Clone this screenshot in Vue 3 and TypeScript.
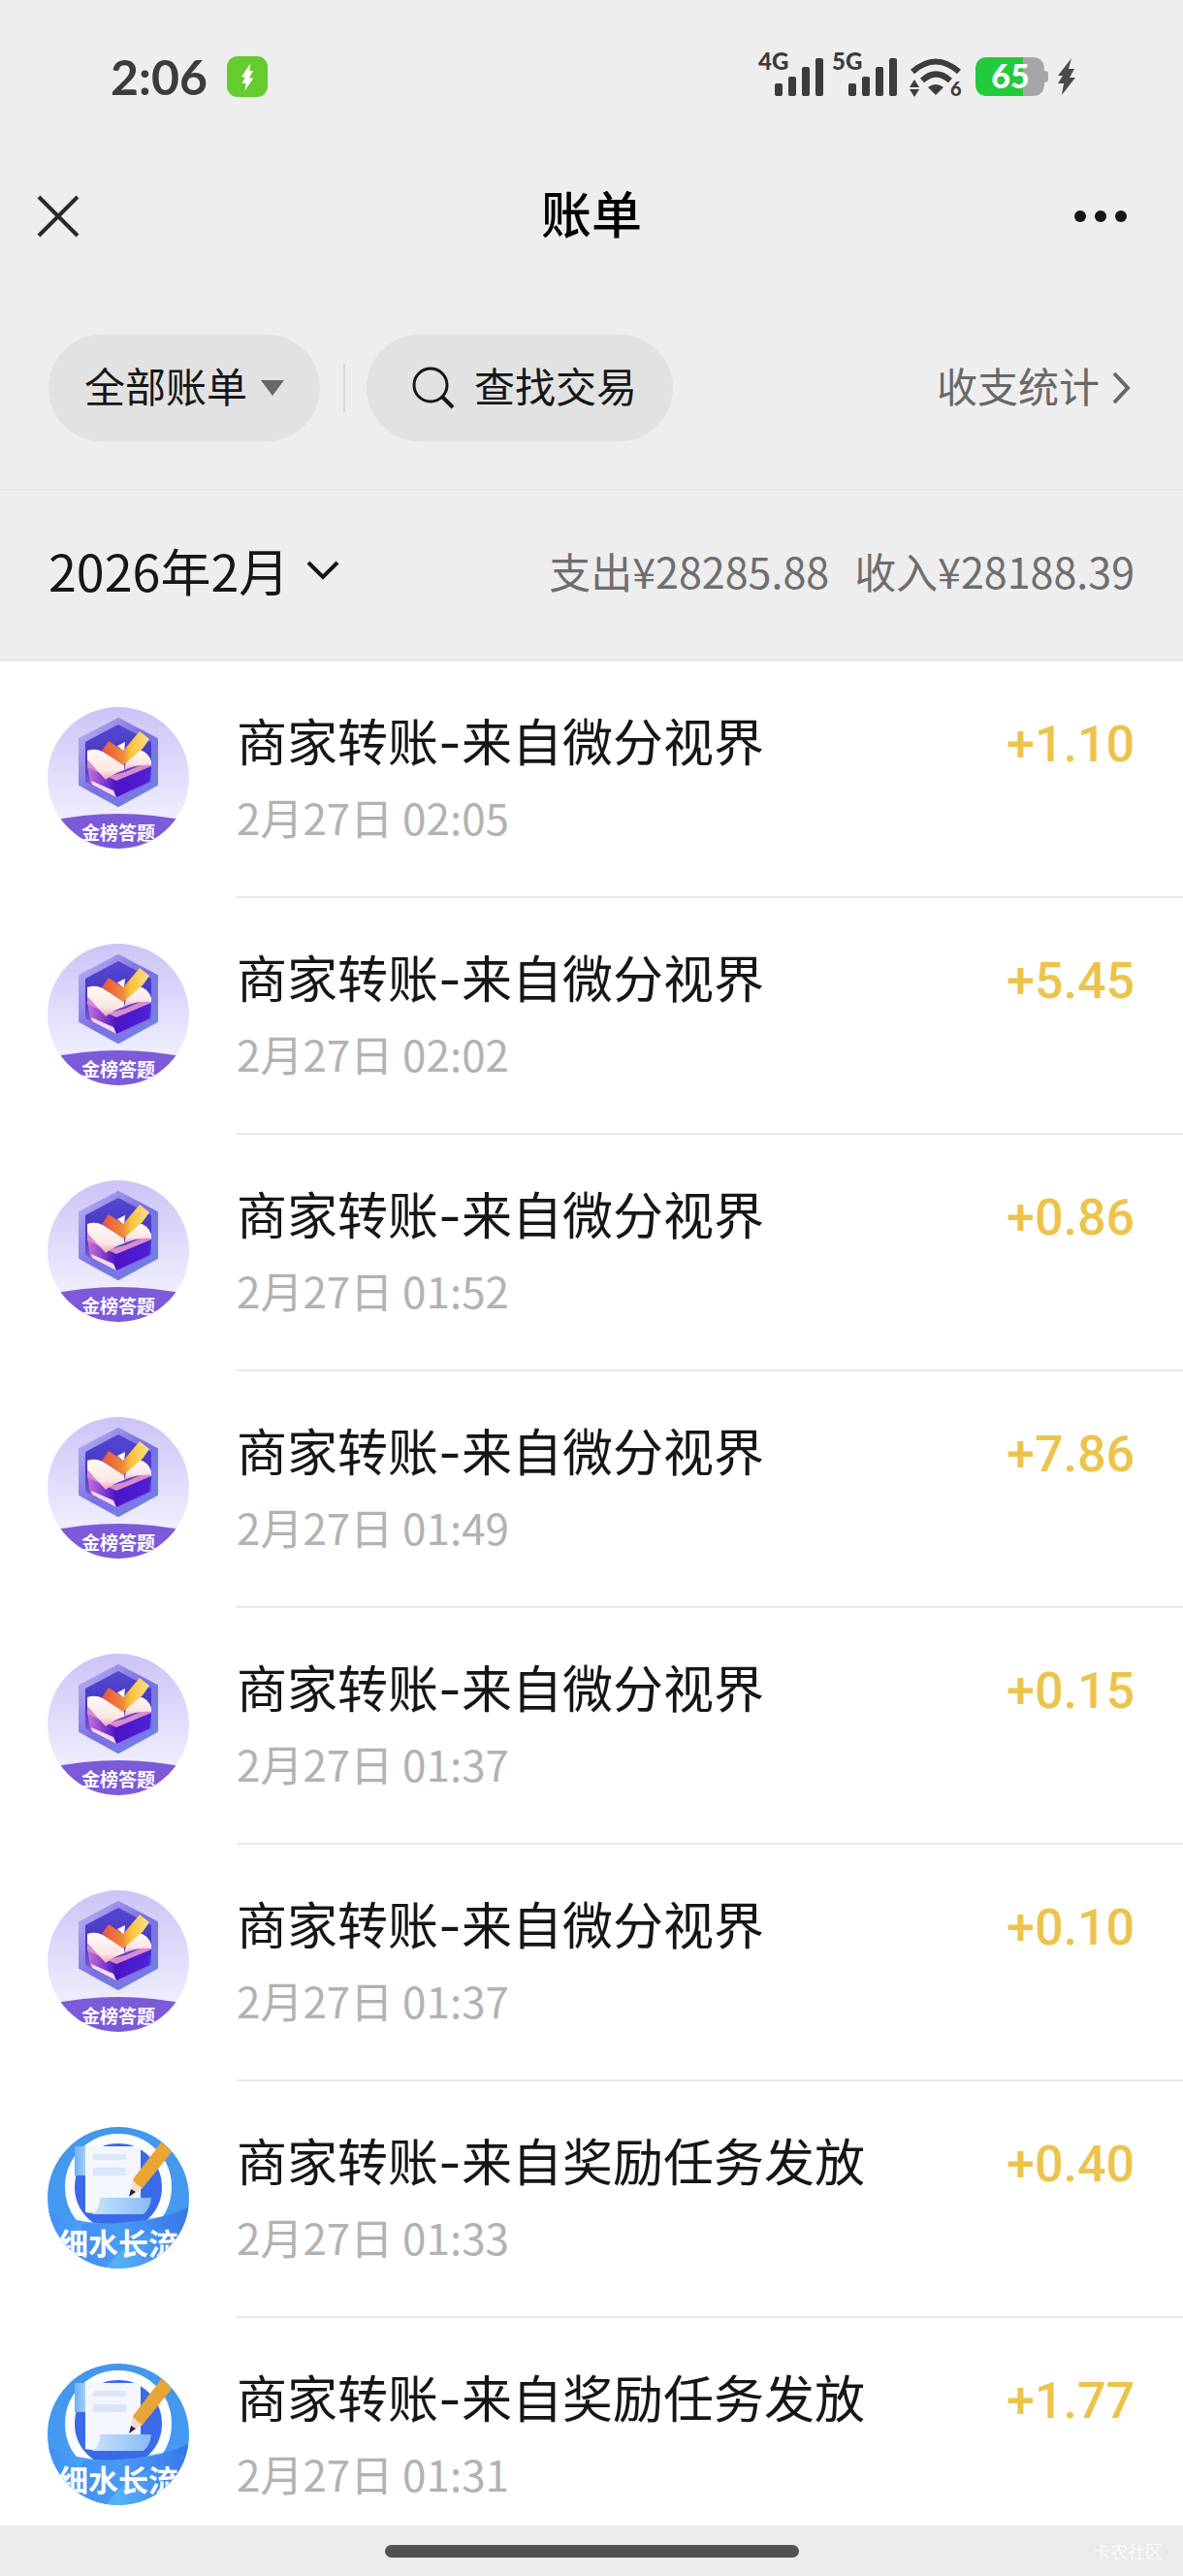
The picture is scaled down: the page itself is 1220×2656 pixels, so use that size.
<script setup lang="ts">
type Merchant = 'quiz' | 'task'

interface Bill {
  id: number
  merchant: Merchant
  title: string
  time: string
  amount: string
}

const names: Record<Merchant, string> = {
  quiz: '商家转账-来自微分视界',
  task: '商家转账-来自奖励任务发放',
}

const source: [Merchant, string, string][] = [
  ['quiz', '2月27日 02:05', '+1.10'],
  ['quiz', '2月27日 02:02', '+5.45'],
  ['quiz', '2月27日 01:52', '+0.86'],
  ['quiz', '2月27日 01:49', '+7.86'],
  ['quiz', '2月27日 01:37', '+0.15'],
  ['quiz', '2月27日 01:37', '+0.10'],
  ['task', '2月27日 01:33', '+0.40'],
  ['task', '2月27日 01:31', '+1.77'],
]

const bills: Bill[] = source.map(([merchant, time, amount], id) => ({
  id,
  merchant,
  title: names[merchant],
  time,
  amount,
}))

const networks = ['4G', '5G']
</script>

<template>
  <div class="page" lang="zh-CN">
    <header class="top">
      <div class="status">
        <div class="status-left">
          <span class="clock">2:06</span>
          <svg class="badge" viewBox="0 0 42 42" aria-hidden="true">
            <rect width="42" height="42" rx="11" fill="#66cb2e" />
            <path d="M24 7.500L15 21.500H19L15.500 28H19.500L18.500 35.500L27.500 22.500H23L27 15H23.500Z" fill="#fff" />
          </svg>
        </div>
        <div class="status-right">
          <svg v-for="net in networks" :key="net" class="signal" viewBox="0 0 68 44">
            <text x="0" y="15" class="net">{{ net }}</text>
            <g fill="#3c3c3c">
              <rect x="17" y="29" width="8" height="13" rx="2" />
              <rect x="31" y="22" width="8" height="20" rx="2" />
              <rect x="45" y="12" width="8" height="30" rx="2" />
              <rect x="59" y="3" width="8" height="39" rx="2" />
            </g>
          </svg>
          <svg class="wifi" viewBox="0 0 54 44">
            <g fill="none" stroke="#3c3c3c" stroke-width="6">
              <path d="M3 17Q27 -4 51 17" />
              <path d="M13 26Q27 13 42 26" />
            </g>
            <path d="M19 33Q27 27 35 33L27 41Z" fill="#3c3c3c" />
            <path d="M0 33L5 25L10 33ZM0 35H10L5 43Z" fill="#3c3c3c" />
            <text x="42" y="42" class="gen">6</text>
          </svg>
          <svg class="battery" viewBox="0 0 76 40">
            <path d="M13 0H58Q71 0 71 13V14Q75 14 75 17V23Q75 26 71 26V27Q71 40 58 40H13Q0 40 0 27V13Q0 0 13 0Z" fill="#a6a6a8" />
            <path d="M13 0H49V40H13Q0 40 0 27V13Q0 0 13 0Z" fill="#22ca3c" />
            <text x="36" y="32" text-anchor="middle" class="level">65</text>
          </svg>
          <svg class="bolt" viewBox="0 0 20 38" aria-hidden="true">
            <path d="M15 0L1 18H6L1 26H7L5 38L19 20H13L18 11H12Z" fill="#4a4a4a" />
          </svg>
        </div>
      </div>

      <nav class="nav">
        <button class="icon-button" type="button" aria-label="关闭">
          <svg width="44" height="44" viewBox="0 0 44 44">
            <path d="M2 2L42 42M42 2L2 42" stroke="#2a2a2a" stroke-width="4" />
          </svg>
        </button>
        <h1>账单</h1>
        <button class="icon-button more" type="button" aria-label="更多">
          <svg width="54" height="44" viewBox="0 0 54 44" fill="#161616">
            <circle cx="6" cy="22" r="6" />
            <circle cx="27" cy="22" r="6" />
            <circle cx="48" cy="22" r="6" />
          </svg>
        </button>
      </nav>

      <div class="filters">
        <button class="pill kind" type="button">
          全部账单
          <svg width="24" height="16" viewBox="0 0 24 16"><path d="M0 0H24L12 16Z" fill="#686868" /></svg>
        </button>
        <span class="rule"></span>
        <button class="pill find" type="button">
          <svg width="44" height="44" viewBox="0 0 44 44" fill="none" stroke="#161616" stroke-width="3">
            <circle cx="19" cy="19" r="17" />
            <path d="M31 31L42 42" stroke-width="4" />
          </svg>
          查找交易
        </button>
        <a class="stats" href="#stats">
          收支统计
          <svg width="18" height="32" viewBox="0 0 18 32" fill="none" stroke="#686868" stroke-width="4">
            <path d="M1 1L15 16L1 31" />
          </svg>
        </a>
      </div>
    </header>

    <section class="month">
      <button class="month-picker" type="button">
        2026年2月
        <svg width="34" height="20" viewBox="0 0 34 20" fill="none" stroke="#161616" stroke-width="4">
          <path d="M2 2L17 17L32 2" />
        </svg>
      </button>
      <p class="totals">
        <span>支出¥28285.88</span>
        <span>收入¥28188.39</span>
      </p>
    </section>

    <ul class="bills">
      <li v-for="bill in bills" :key="bill.id" class="bill">
        <svg v-if="bill.merchant === 'quiz'" class="logo" viewBox="0 0 146 146">
          <defs>
            <linearGradient id="quiz-sky" x1="0" y1="0" x2="0" y2="1">
              <stop offset="0" stop-color="#cbc4f7" />
              <stop offset="0.75" stop-color="#eeecfe" />
            </linearGradient>
            <linearGradient id="quiz-edge" x1="0" y1="0" x2="1" y2="1">
              <stop offset="0" stop-color="#bcb4f6" />
              <stop offset="0.5" stop-color="#7b6fe2" />
              <stop offset="1" stop-color="#6d86ea" />
            </linearGradient>
            <linearGradient id="quiz-core" x1="0" y1="0" x2="0" y2="1">
              <stop offset="0" stop-color="#5347d2" />
              <stop offset="0.5" stop-color="#4636be" />
              <stop offset="1" stop-color="#9c72e6" />
            </linearGradient>
            <linearGradient id="quiz-cover" x1="0" y1="0" x2="1" y2="0">
              <stop offset="0" stop-color="#c873d8" />
              <stop offset="0.45" stop-color="#4a14c4" />
              <stop offset="1" stop-color="#4f22d8" />
            </linearGradient>
            <linearGradient id="quiz-page" x1="0" y1="0" x2="0" y2="1">
              <stop offset="0" stop-color="#fffaf6" />
              <stop offset="0.7" stop-color="#fbe6e4" />
              <stop offset="1" stop-color="#ee9db4" />
            </linearGradient>
            <linearGradient id="quiz-tick" x1="0" y1="0" x2="1" y2="0">
              <stop offset="0" stop-color="#e8523e" />
              <stop offset="0.45" stop-color="#f08a3c" />
              <stop offset="0.6" stop-color="#f8c23c" />
              <stop offset="1" stop-color="#fbe08a" />
            </linearGradient>
            <clipPath id="quiz-clip"><circle cx="73" cy="73" r="73" /></clipPath>
          </defs>
          <g clip-path="url(#quiz-clip)">
            <rect width="146" height="146" fill="url(#quiz-sky)" />
            <path d="M73 12L113 33V80L73 102L33 80V33Z" fill="url(#quiz-edge)" stroke="url(#quiz-edge)" stroke-width="2" stroke-linejoin="round" />
            <path d="M73 18L107 36V77L73 95L39 77V36Z" fill="url(#quiz-core)" />
            <path d="M41 60L71 74L107 58L105 77L71 93L44 78Z" fill="url(#quiz-cover)" />
            <path d="M45 76L68 86L71 93L46 80Z" fill="#f3d9f2" />
            <path d="M41 48L60 72L80 67L107 55V61L71 76L41 62Z" fill="#d98ad0" />
            <path d="M41 45Q49 42 57 46L79 59V65Q69 68 60 75L41 54Z" fill="url(#quiz-page)" />
            <path d="M79 65L81 57L94 44Q104 46 107 56V60Q92 59 79 65Z" fill="url(#quiz-page)" />
            <path d="M72 40L80 36L79 46Z" fill="#fff" />
            <path d="M63 35L78 45L95 25L105 33L98 43L78 60L56 45Z" fill="url(#quiz-tick)" />
            <path d="M0 118Q73 102 146 118V146H0Z" fill="#7d5ad8" />
            <text x="73" y="137" text-anchor="middle" class="quiz-name">金榜答题</text>
          </g>
        </svg>
        <svg v-else class="logo" viewBox="0 0 146 146">
          <defs>
            <linearGradient id="task-sky" x1="0" y1="0" x2="0" y2="1">
              <stop offset="0" stop-color="#4497e8" />
              <stop offset="1" stop-color="#439df8" />
            </linearGradient>
            <linearGradient id="task-sea" x1="0" y1="0" x2="1" y2="0">
              <stop offset="0" stop-color="#3f90f4" />
              <stop offset="0.5" stop-color="#56b2f5" />
              <stop offset="1" stop-color="#3873e8" />
            </linearGradient>
            <linearGradient id="task-roll" x1="0" y1="0" x2="1" y2="0">
              <stop offset="0" stop-color="#c9e2fb" />
              <stop offset="1" stop-color="#86bbf5" />
            </linearGradient>
            <linearGradient id="task-flap" x1="0" y1="0" x2="1" y2="0">
              <stop offset="0" stop-color="#6bb0f5" />
              <stop offset="1" stop-color="#a9d0f8" />
            </linearGradient>
            <clipPath id="task-clip"><circle cx="73" cy="73" r="73" /></clipPath>
          </defs>
          <g clip-path="url(#task-clip)">
            <rect width="146" height="146" fill="url(#task-sky)" />
            <circle cx="73" cy="62" r="50" fill="#3b6ae8" stroke="#fbfdff" stroke-width="10" />
            <path d="M0 86Q42 104 82 98Q120 96 146 82V146H0Z" fill="url(#task-sea)" />
            <path d="M36 100Q90 100 146 86V100Q90 104 60 146H30Z" fill="#3a7cf0" opacity="0.45" />
            <path d="M28 20H40V50H28Z" fill="url(#task-flap)" />
            <path d="M39 20H92Q96 20 96 24V80L54 88Q50 90 39 88Z" fill="#f4f6fd" />
            <path d="M47 28H81V34H47ZM47 42H81V50H47Z" fill="#dbe6fa" />
            <path d="M54 73H107Q106 84 99 90H46Q54 86 54 73Z" fill="url(#task-roll)" />
            <path d="M88 54L98 63L85 72Z" fill="#f2dccb" />
            <path d="M86 64L91 67L84 72Z" fill="#2a2346" />
            <path d="M118 15L128 26L98 63Q92 60 88 54Z" fill="#e9a536" />
            <text x="73" y="132" text-anchor="middle" class="task-name">细水长流</text>
          </g>
        </svg>
        <div class="detail">
          <div class="line">
            <span class="title">{{ bill.title }}</span>
            <span class="amount">{{ bill.amount }}</span>
          </div>
          <time class="time">{{ bill.time }}</time>
        </div>
      </li>
    </ul>

    <footer class="home">
      <span class="handle"></span>
      <span class="mark">卡农社区</span>
    </footer>
  </div>
</template>

<style>
body {
  background: #fff;
}
</style>

<style scoped>
.page {
  min-height: 100vh;
  color: #161616;
  font-family: 'Noto Sans CJK SC', 'Noto Sans', sans-serif;
}

button {
  margin: 0;
  padding: 0;
  border: 0;
  background: none;
  color: inherit;
  font: inherit;
}

svg {
  display: block;
  flex: none;
  overflow: visible;
}

.top {
  border-bottom: 2px solid #e6e6e6;
  background: #eee;
  font-family: Inter, 'Noto Sans CJK SC', sans-serif;
}

.status {
  display: flex;
  align-items: center;
  justify-content: space-between;
  height: 158px;
  padding: 0 110px 0 114px;
}

.status-left,
.status-right {
  display: flex;
  align-items: center;
}

.status-left {
  gap: 20px;
}

.clock {
  color: #3c3c3c;
  font: 700 50px/60px Lato, sans-serif;
}

.badge {
  width: 42px;
  height: 42px;
}

.signal {
  width: 68px;
  height: 44px;
  margin-right: 8px;
}

.net {
  fill: #3c3c3c;
  font: 900 24px Lato, sans-serif;
}

.wifi {
  width: 54px;
  height: 44px;
  margin-right: 14px;
  margin-left: 4px;
}

.gen {
  fill: #3c3c3c;
  font: 900 20px Lato, sans-serif;
}

.battery {
  width: 76px;
  height: 40px;
}

.level {
  fill: #fff;
  font: 900 34px Lato, sans-serif;
}

.bolt {
  width: 20px;
  height: 38px;
  margin-left: 8px;
}

.nav {
  display: grid;
  grid-template-columns: 1fr auto 1fr;
  align-items: center;
  height: 130px;
  padding: 0 58px 0 38px;
  column-gap: 20px;
}

.nav h1 {
  margin: 0;
  padding-left: 20px;
  color: #000;
  font-size: 52px;
  font-weight: 500;
  line-height: 60px;
}

.icon-button {
  display: flex;
  width: 54px;
}

.more {
  justify-self: end;
}

.filters {
  display: flex;
  align-items: center;
  padding: 57px 50px 49px;
  font-size: 42px;
  line-height: 52px;
}

.pill {
  display: flex;
  align-items: center;
  height: 110px;
  border-radius: 55px;
  background: #e2e2e2;
}

.kind {
  gap: 14px;
  padding: 0 37px;
}

.find {
  gap: 20px;
  padding: 0 37px 0 47px;
}

.rule {
  width: 2px;
  height: 50px;
  margin: 0 22px 0 24px;
  background: #dadada;
}

.stats {
  display: flex;
  align-items: center;
  gap: 14px;
  margin-left: auto;
  padding-right: 4px;
  color: #686868;
  text-decoration: none;
}

.month {
  display: flex;
  align-items: center;
  justify-content: space-between;
  padding: 52px 50px 62px;
  border-bottom: 2px solid #e6e6e6;
  background: #eee;
}

.month-picker {
  display: flex;
  align-items: center;
  gap: 18px;
  font-size: 52px;
  line-height: 60px;
}

.totals {
  display: flex;
  gap: 26px;
  margin: 0;
  color: #6e6e6e;
  font-size: 43px;
  line-height: 60px;
}

.bills {
  margin: 0;
  padding: 0;
  list-style: none;
}

.bill {
  display: flex;
  gap: 49px;
  padding-left: 49px;
}

.logo {
  width: 146px;
  height: 146px;
  margin-top: 47px;
}

.quiz-name {
  fill: #fff;
  font-family: 'Noto Sans CJK SC', sans-serif;
  font-size: 19px;
  font-weight: 700;
}

.task-name {
  fill: #fff;
  font-family: 'Noto Sans CJK SC', sans-serif;
  font-size: 31px;
  font-weight: 700;
}

.detail {
  flex: 1;
  padding: 55px 50px 56px 0;
  border-bottom: 2px solid #e8e8e8;
}

.line {
  display: flex;
  align-items: baseline;
  justify-content: space-between;
  height: 60px;
  margin-bottom: 19px;
  font-size: 52px;
  line-height: 60px;
}

.title {
  font-family: Inter, 'Noto Sans CJK SC', sans-serif;
}

.amount {
  color: #edc34c;
  font-family: Roboto, sans-serif;
  font-weight: 500;
}

.time {
  display: block;
  color: #b2b2b2;
  font-size: 44px;
  line-height: 52px;
}

.home {
  position: fixed;
  right: 0;
  bottom: 0;
  left: 0;
  display: grid;
  grid-template-columns: 1fr 35% 1fr;
  align-items: center;
  height: 52px;
  background: #ebebeb;
}

.handle {
  grid-column: 2;
  height: 13px;
  border-radius: 7px;
  background: #525252;
}

.mark {
  justify-self: end;
  padding-right: 21px;
  color: #fafafa;
  font-size: 18px;
  line-height: 24px;
}
</style>
